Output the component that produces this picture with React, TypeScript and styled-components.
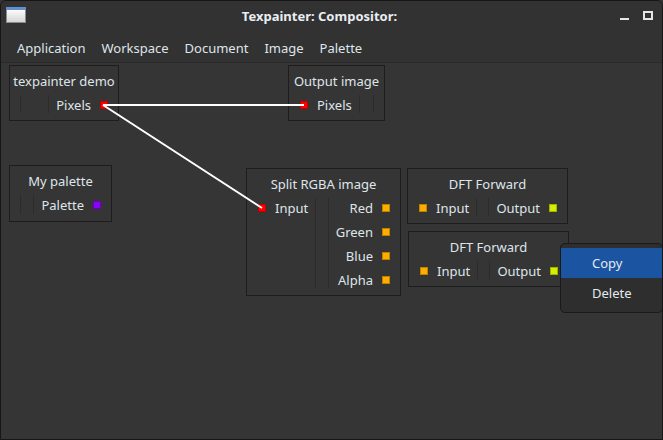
import React from 'react';
import styled, { createGlobalStyle } from 'styled-components';

const GlobalStyle = createGlobalStyle`
  html, body {
    margin: 0;
    padding: 0;
    background: #353535;
  }
  * {
    box-sizing: border-box;
  }
`;

const Window = styled.div`
  width: 663px;
  height: 440px;
  display: flex;
  flex-direction: column;
  background: #353535;
  border: 1px solid #161616;
  border-radius: 6px 6px 0 0;
  overflow: hidden;
  font-family: 'Noto Sans', 'Open Sans', sans-serif;
  font-size: 13px;
  color: #dfe5ea;
`;

const TitleBar = styled.div`
  height: 30px;
  display: flex;
  align-items: stretch;
  background: #323232;
`;

const IconBlock = styled.div`
  width: 32px;
  padding: 6px 0 0 5px;
`;

const AppIcon = styled.div`
  width: 20px;
  height: 16px;
  border: 1px solid #8c8c8c;
  border-top: 3px solid #5f8fcf;
  background: linear-gradient(#fbfbfb, #d4d6d8);
`;

const Title = styled.div`
  flex: 1;
  text-align: center;
  font-weight: 700;
  line-height: 30px;
  color: #e8eef2;
`;

const ButtonsBlock = styled.div`
  width: 56px;
  display: flex;
  align-items: flex-end;
  justify-content: flex-end;
  gap: 14px;
  padding: 0 9px 11px 0;
`;

const MinimizeButton = styled.div`
  width: 9px;
  height: 2px;
  background: #e6e6e6;
`;

const MaximizeButton = styled.div`
  width: 10px;
  height: 9px;
  border: 2px solid #e6e6e6;
`;

const MenuBar = styled.div`
  height: 32px;
  display: flex;
  align-items: center;
  padding: 3px 0 0 8px;
  background: #323232;
  border-bottom: 1px solid #2a2a2a;
`;

const MenuItem = styled.div`
  padding: 0 8px;
`;

const Canvas = styled.div`
  position: relative;
  flex: 1;
  background: #353535;
`;

const Edges = styled.svg`
  position: absolute;
  left: 0;
  top: 0;
  width: 100%;
  height: 100%;
  pointer-events: none;
  z-index: 2;
`;

const Node = styled.div<{ $x: number; $y: number; $w: number; $h: number }>`
  position: absolute;
  left: ${(p) => p.$x}px;
  top: ${(p) => p.$y}px;
  width: ${(p) => p.$w}px;
  height: ${(p) => p.$h}px;
  display: flex;
  flex-direction: column;
  border: 1px solid #1d1d1d;
  background: #353535;
`;

const NodeTitle = styled.div`
  padding-top: 5px;
  height: 27px;
  line-height: 20px;
  text-align: center;
  white-space: nowrap;
`;

const NodeBody = styled.div`
  display: flex;
  flex: 1;
  padding-bottom: 3px;
`;

const PortColumn = styled.div<{ $side: 'in' | 'out'; $empty?: boolean }>`
  display: flex;
  flex-direction: column;
  align-items: ${(p) => (p.$side === 'in' ? 'flex-start' : 'flex-end')};
  width: ${(p) => (p.$empty ? '10px' : 'auto')};
  padding: ${(p) =>
    p.$empty ? '0' : p.$side === 'in' ? '0 7px 0 11px' : '0 10px 0 7px'};
`;

const Divider = styled.div`
  flex: 1;
  min-width: 12px;
  margin: 2px 0 4px;
  border-left: 1px solid #2b2b2b;
  border-right: 1px solid #2b2b2b;
`;

const PortRow = styled.div`
  height: 24px;
  display: flex;
  align-items: center;
  gap: 9px;
  white-space: nowrap;
`;

const Port = styled.span<{ $color: string }>`
  width: 8px;
  height: 8px;
  background: ${(p) => p.$color};
  box-shadow: inset 0 0 0 1px rgba(0, 0, 0, 0.25);
`;

const ContextMenu = styled.div`
  position: absolute;
  left: 559px;
  top: 180px;
  width: 103px;
  height: 70px;
  padding-top: 4px;
  background: #2e2e2e;
  border: 1px solid #1a1a1a;
  border-radius: 5px;
  z-index: 3;
`;

const ContextItem = styled.div<{ $active?: boolean }>`
  height: 30px;
  line-height: 30px;
  padding-left: 31px;
  background: ${(p) => (p.$active ? '#1b54a0' : 'transparent')};
  color: #e4eaf0;
`;

type PortDef = { name: string; color: string };

type NodeDef = {
  title: string;
  x: number;
  y: number;
  w: number;
  h: number;
  inputs: PortDef[];
  outputs: PortDef[];
};

const RED = '#ff0000';
const ORANGE = '#ffad00';
const LIME = '#d4ee00';
const PURPLE = '#8b00ff';

const nodes: NodeDef[] = [
  { title: 'texpainter demo', x: 8, y: 2, w: 110, h: 56, inputs: [], outputs: [{ name: 'Pixels', color: RED }] },
  { title: 'Output image', x: 287, y: 2, w: 97, h: 56, inputs: [{ name: 'Pixels', color: RED }], outputs: [] },
  { title: 'My palette', x: 8, y: 102, w: 103, h: 57, inputs: [], outputs: [{ name: 'Palette', color: PURPLE }] },
  {
    title: 'Split RGBA image',
    x: 245,
    y: 105,
    w: 155,
    h: 128,
    inputs: [{ name: 'Input', color: RED }],
    outputs: [
      { name: 'Red', color: ORANGE },
      { name: 'Green', color: ORANGE },
      { name: 'Blue', color: ORANGE },
      { name: 'Alpha', color: ORANGE },
    ],
  },
  { title: 'DFT Forward', x: 406, y: 105, w: 161, h: 56, inputs: [{ name: 'Input', color: ORANGE }], outputs: [{ name: 'Output', color: LIME }] },
  { title: 'DFT Forward', x: 407, y: 168, w: 161, h: 56, inputs: [{ name: 'Input', color: ORANGE }], outputs: [{ name: 'Output', color: LIME }] },
];

function GraphNode({ node }: { node: NodeDef }) {
  return (
    <Node $x={node.x} $y={node.y} $w={node.w} $h={node.h}>
      <NodeTitle>{node.title}</NodeTitle>
      <NodeBody>
        <PortColumn $side="in" $empty={node.inputs.length === 0}>
          {node.inputs.map((p) => (
            <PortRow key={p.name}>
              <Port $color={p.color} />
              {p.name}
            </PortRow>
          ))}
        </PortColumn>
        <Divider />
        <PortColumn $side="out" $empty={node.outputs.length === 0}>
          {node.outputs.map((p) => (
            <PortRow key={p.name}>
              {p.name}
              <Port $color={p.color} />
            </PortRow>
          ))}
        </PortColumn>
      </NodeBody>
    </Node>
  );
}

export default function App() {
  return (
    <>
      <GlobalStyle />
      <Window>
        <TitleBar>
          <IconBlock>
            <AppIcon />
          </IconBlock>
          <Title>{'Texpainter: Compositor:'}</Title>
          <ButtonsBlock>
            <MinimizeButton />
            <MaximizeButton />
          </ButtonsBlock>
        </TitleBar>
        <MenuBar>
          <MenuItem>{'Application'}</MenuItem>
          <MenuItem>{'Workspace'}</MenuItem>
          <MenuItem>{'Document'}</MenuItem>
          <MenuItem>{'Image'}</MenuItem>
          <MenuItem>{'Palette'}</MenuItem>
        </MenuBar>
        <Canvas>
          {nodes.map((n, i) => (
            <GraphNode key={i} node={n} />
          ))}
          <Edges>
            <line x1={102} y1={42} x2={303} y2={42} stroke="#fff" strokeWidth={2} />
            <line x1={102} y1={42} x2={261} y2={145} stroke="#fff" strokeWidth={2} />
          </Edges>
          <ContextMenu>
            <ContextItem $active>{'Copy'}</ContextItem>
            <ContextItem>{'Delete'}</ContextItem>
          </ContextMenu>
        </Canvas>
      </Window>
    </>
  );
}
